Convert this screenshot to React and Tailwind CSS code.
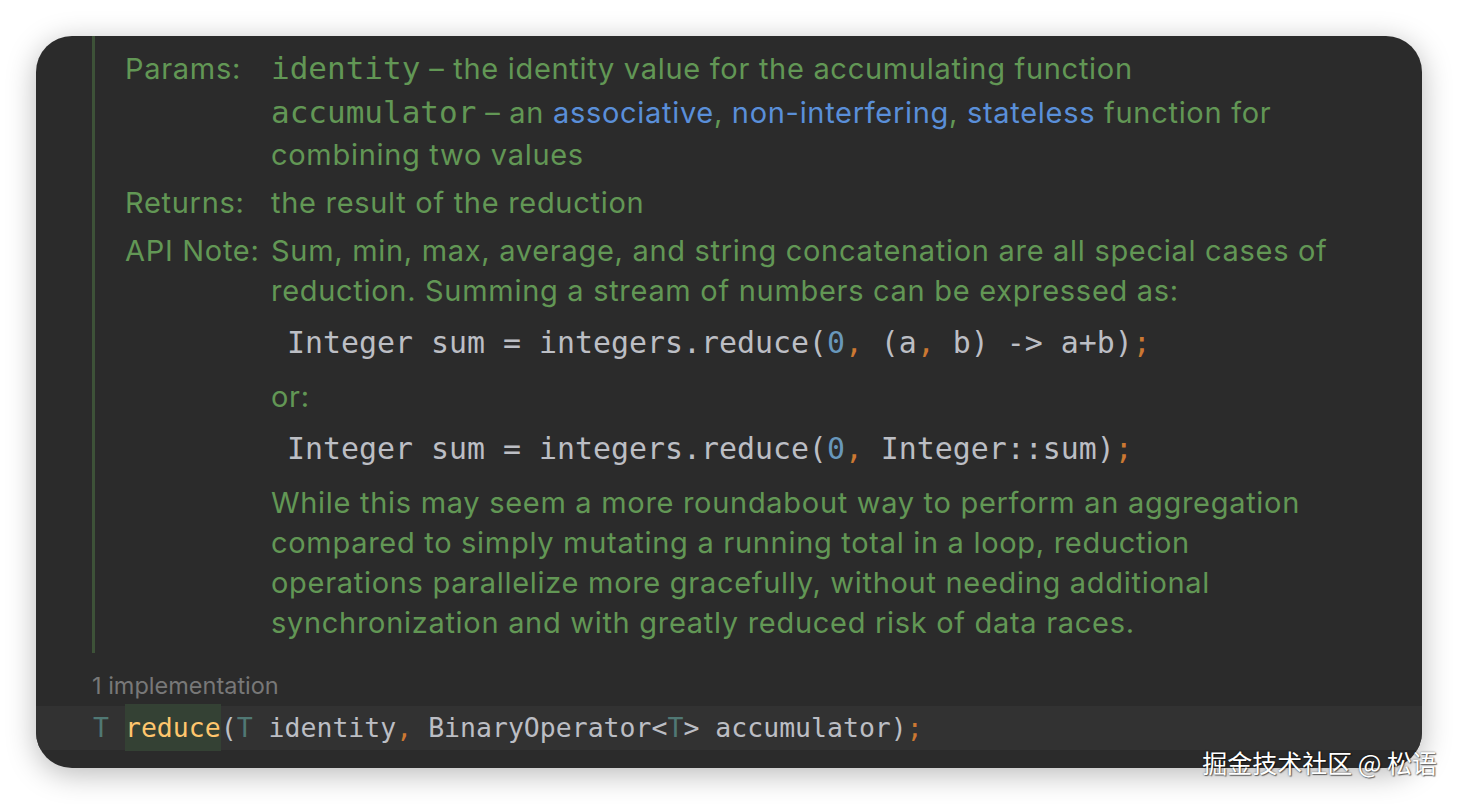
const sans = "font-['Inter','Liberation_Sans',sans-serif]";
const mono = "font-['DejaVu_Sans_Mono','Liberation_Mono',monospace]";

function Row({ label, h = "h-[40px]", className = "", children }) {
  return (
    <div className={`flex items-center ${h} ${className}`}>
      <div className="w-[146px] shrink-0">{label}</div>
      <div className="whitespace-nowrap">{children}</div>
    </div>
  );
}

function Link({ children }) {
  return <span className="text-[#5a8fd9]">{children}</span>;
}

function P({ children }) {
  return <span className={`${mono} text-[31px] leading-none tracking-normal`}>{children}</span>;
}

const Num = ({ children }) => <span className="text-[#6897bb]">{children}</span>;
const Punc = ({ children }) => <span className="text-[#cc7832]">{children}</span>;
const Tp = ({ children }) => <span className="text-[#507874]">{children}</span>;

function CodeLine({ children, className = "" }) {
  return (
    <div className={`flex items-center h-[40px] pl-[164px] ${className}`}>
      <pre className={`${mono} text-[29.9px] leading-none tracking-normal text-[#bcbec4]`}>{children}</pre>
    </div>
  );
}

export default function App() {
  return (
    <div className="relative w-[1458px] h-[804px] bg-white p-[36px]">
      <div className="w-[1386px] h-[732px] bg-[#2b2b2b] rounded-[36px] overflow-hidden shadow-[0_6px_30px_rgba(0,0,0,0.28)] flex flex-col">
        <div className={`ml-[56px] border-l-[3px] border-[#3d5238] pl-[30px] pt-[11px] pb-[10px] text-[29px] tracking-[0.7px] text-[#629755] ${sans}`}>
          <Row label="Params:" h="h-[44px]">
            <P>identity</P> – the identity value for the accumulating function
          </Row>
          <Row h="h-[44px]">
            <P>accumulator</P> – an <Link>associative</Link>, <Link>non-interfering</Link>, <Link>stateless</Link> function for
          </Row>
          <Row>combining two values</Row>
          <Row label="Returns:" className="mt-[8px]">the result of the reduction</Row>
          <Row label="API Note:" className="mt-[8px]">
            Sum, min, max, average, and string concatenation are all special cases of
          </Row>
          <Row>reduction. Summing a stream of numbers can be expressed as:</Row>
          <CodeLine className="mt-[12px] -ml-[2px]">
            Integer sum = integers.reduce(<Num>0</Num><Punc>,</Punc> (a<Punc>,</Punc> b) -&gt; a+b)<Punc>;</Punc>
          </CodeLine>
          <Row className="mt-[14px]">or:</Row>
          <CodeLine className="mt-[12px] -ml-[2px]">
            Integer sum = integers.reduce(<Num>0</Num><Punc>,</Punc> Integer::sum)<Punc>;</Punc>
          </CodeLine>
          <Row className="mt-[14px]">While this may seem a more roundabout way to perform an aggregation</Row>
          <Row>compared to simply mutating a running total in a loop, reduction</Row>
          <Row>operations parallelize more gracefully, without needing additional</Row>
          <Row>synchronization and with greatly reduced risk of data races.</Row>
        </div>

        <div className={`mt-[13px] h-[40px] flex items-center pl-[56px] text-[23.5px] text-[#787878] ${sans}`}>
          1 implementation
        </div>

        <div className="h-[44px] bg-[#323232] flex items-center pl-[57px]">
          <pre className={`${mono} text-[26.5px] leading-none text-[#bcbec4]`}>
            <Tp>T</Tp> <span className="bg-[#344134] text-[#ffc66d] py-[8px]">reduce</span>(<Tp>T</Tp> identity<Punc>,</Punc> BinaryOperator&lt;<Tp>T</Tp>&gt; accumulator)<Punc>;</Punc>
          </pre>
        </div>
      </div>

      <div className="absolute right-[21px] top-[750px] text-[25px] leading-none text-white font-['Noto_Sans_CJK_SC',sans-serif] [text-shadow:0_0_2px_rgba(0,0,0,0.6),1px_1px_1px_rgba(0,0,0,0.5)]">
        掘金技术社区 @ 松语
      </div>
    </div>
  );
}
